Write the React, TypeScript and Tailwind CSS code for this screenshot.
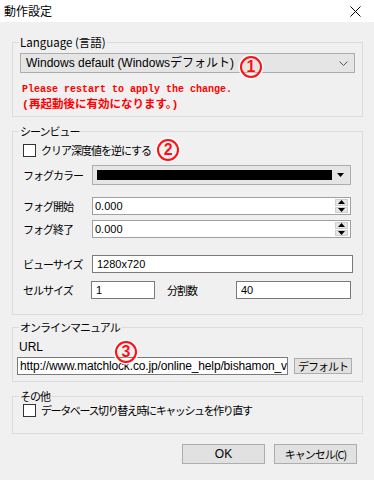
import React from 'react';

const jp = "font-['Noto_Sans_CJK_JP','Liberation_Sans',sans-serif]";
const lbl = 'text-[11px] tracking-[-1px] whitespace-nowrap';

const Badge = ({ n, className = '' }: { n: string; className?: string }) => (
  <div
    className={`w-[22px] h-[22px] rounded-full border-[2px] border-[#ff1010] ring-[1.5px] ring-white flex items-center justify-center text-[#ff1010] text-[16px] font-bold leading-none font-['Liberation_Sans',sans-serif] [text-shadow:0_0_2px_#fff] ${className}`}
  >
    {n}
  </div>
);

const GroupBox = ({
  title,
  children,
  className = '',
  titleClass = lbl,
}: {
  title: string;
  children: React.ReactNode;
  className?: string;
  titleClass?: string;
}) => (
  <fieldset className={`relative border border-[#dcdcdc] ${className}`}>
    <legend className={`ml-[6px] px-[1px] leading-[14px] ${titleClass}`}>{title}</legend>
    {children}
  </fieldset>
);

const Checkbox = () => (
  <div className="w-[13px] h-[13px] border border-[#333] bg-white shrink-0" />
);

const Spin = () => (
  <div className="flex flex-col w-[13px] h-[14px] gap-[1px] mr-[2px]">
    {[0, 1].map((i) => (
      <div key={i} className="flex-1 bg-[#e6e6e6] border border-[#cfcfcf] flex items-center justify-center">
        <svg width="7" height="4" viewBox="0 0 7 4">
          {i === 0 ? <path d="M0 4 L3.5 0 L7 4 Z" fill="#000" /> : <path d="M0 0 L3.5 4 L7 0 Z" fill="#000" />}
        </svg>
      </div>
    ))}
  </div>
);

const Row = ({ label, children, className = '' }: { label: string; children: React.ReactNode; className?: string }) => (
  <div className={`flex items-center ${className}`}>
    <div className={`w-[79px] pl-[10px] ${lbl}`}>{label}</div>
    {children}
  </div>
);

export default function App() {
  return (
    <div className={`w-[374px] h-[480px] bg-[#f0f0f0] text-black overflow-hidden ${jp}`}>
      {/* Title bar */}
      <div className="h-[22px] bg-white flex items-center justify-between pl-[4px] pr-[13px]">
        <span className="text-[12px]">動作設定</span>
        <svg width="11" height="11" viewBox="0 0 11 11">
          <path d="M0.5 0.5 L10.5 10.5 M10.5 0.5 L0.5 10.5" stroke="#000" strokeWidth="1" />
        </svg>
      </div>

      <div className="pl-[12px] pr-[11px]">
        {/* Language */}
        <GroupBox
          title="Language (言語)"
          titleClass="text-[11.5px] whitespace-nowrap"
          className="mt-[13px] pb-[4px]"
        >
          <Badge n="1" className="absolute left-[227px] top-[7px]" />
          <div className="mx-[7px] mt-[4px] h-[20px] bg-[#e5e5e5] border border-[#adadad] flex items-center justify-between pl-[5px] pr-[6px] text-[12px] font-['Liberation_Sans','Noto_Sans_CJK_JP',sans-serif]">
            <span>Windows default (Windowsデフォルト)</span>
            <svg width="9" height="5" viewBox="0 0 9 5">
              <path d="M0.5 0.5 L4.5 4.5 L8.5 0.5" stroke="#555" strokeWidth="1" fill="none" />
            </svg>
          </div>
          <div className="mt-[9px] ml-[9px] text-[#ff0000] leading-[15px] font-bold font-['Liberation_Mono','Noto_Sans_CJK_JP',monospace]">
            <div className="text-[10px]">Please restart to apply the change.</div>
            <div className="text-[11.5px]">(再起動後に有効になります。)</div>
          </div>
        </GroupBox>

        {/* Scene view */}
        <GroupBox title="シーンビュー" className="mt-[7px] pb-[15px]">
          <div className="flex items-center mt-[4px] h-[16px] pl-[10px]">
            <Checkbox />
            <span className={`ml-[5px] ${lbl}`}>クリア深度値を逆にする</span>
            <Badge n="2" className="ml-[6px]" />
          </div>
          <Row label="フォグカラー" className="mt-[7px]">
            <div className="w-[259px] h-[20px] border border-[#adadad] bg-[#e5e5e5] flex items-center pl-[4px] pr-[6px]">
              <div className="flex-1 h-[10px] bg-black" />
              <svg width="7" height="4" viewBox="0 0 7 4" className="ml-[5px]">
                <path d="M0 0 L3.5 4 L7 0 Z" fill="#000" />
              </svg>
            </div>
          </Row>
          <Row label="フォグ開始" className="mt-[12px]">
            <div className="w-[259px] h-[18px] border border-[#a0a0a0] bg-white flex items-center justify-between pl-[2px] text-[11px] font-['Liberation_Sans',sans-serif]">
              <span>0.000</span>
              <Spin />
            </div>
          </Row>
          <Row label="フォグ終了" className="mt-[5px]">
            <div className="w-[259px] h-[18px] border border-[#a0a0a0] bg-white flex items-center justify-between pl-[2px] text-[11px] font-['Liberation_Sans',sans-serif]">
              <span>0.000</span>
              <Spin />
            </div>
          </Row>
          <Row label="ビューサイズ" className="mt-[17px]">
            <div className="w-[261px] h-[18px] border border-[#7a7a7a] bg-white flex items-center pl-[4px] text-[11px] font-['Liberation_Sans',sans-serif]">
              1280x720
            </div>
          </Row>
          <div className="flex items-center mt-[8px]">
            <div className={`w-[78px] pl-[10px] ${lbl}`}>セルサイズ</div>
            <div className="w-[64px] h-[18px] border border-[#7a7a7a] bg-white flex items-center pl-[4px] text-[11px] font-['Liberation_Sans',sans-serif]">
              1
            </div>
            <div className={`w-[81px] pl-[12px] ${lbl}`}>分割数</div>
            <div className="w-[115px] h-[18px] border border-[#7a7a7a] bg-white flex items-center pl-[4px] text-[11px] font-['Liberation_Sans',sans-serif]">
              40
            </div>
          </div>
        </GroupBox>

        {/* Online manual */}
        <GroupBox title="オンラインマニュアル" className="mt-[5px] pb-[6px]">
          <Badge n="3" className="absolute left-[102px] top-[7px]" />
          <div className="mt-[6px] pl-[6px] text-[12px] leading-[15px] font-['Liberation_Sans',sans-serif]">URL</div>
          <div className="flex items-center mt-[2px] pl-[4px]">
            <div className="w-[271px] h-[18px] border border-[#7a7a7a] bg-white flex items-center pl-[2px] text-[12px] overflow-hidden whitespace-nowrap font-['Liberation_Sans',sans-serif] tracking-[-0.15px]">
              http://www.matchlock.co.jp/online_help/bishamon_v
            </div>
            <button className={`ml-[6px] w-[58px] h-[16px] bg-[#e1e1e1] border border-[#adadad] leading-none flex items-center justify-center ${lbl}`}>
              デフォルト
            </button>
          </div>
        </GroupBox>

        {/* Other */}
        <GroupBox title="その他" className="mt-[7px] pb-[16px]">
          <div className="flex items-center h-[14px] pl-[10px]">
            <Checkbox />
            <span className="ml-[5px] text-[11px] tracking-[-1.4px] whitespace-nowrap">
              データベース切り替え時にキャッシュを作り直す
            </span>
          </div>
        </GroupBox>
      </div>

      {/* Buttons */}
      <div className="flex justify-end gap-[9px] pr-[17px] mt-[10px]">
        <button className="w-[83px] h-[20px] bg-[#e1e1e1] border border-[#adadad] text-[12px] leading-none flex items-center justify-center font-['Liberation_Sans',sans-serif]">
          OK
        </button>
        <button className={`w-[83px] h-[20px] bg-[#e1e1e1] border border-[#adadad] leading-none flex items-center justify-center ${lbl}`}>
          キャンセル(C)
        </button>
      </div>
    </div>
  );
}
